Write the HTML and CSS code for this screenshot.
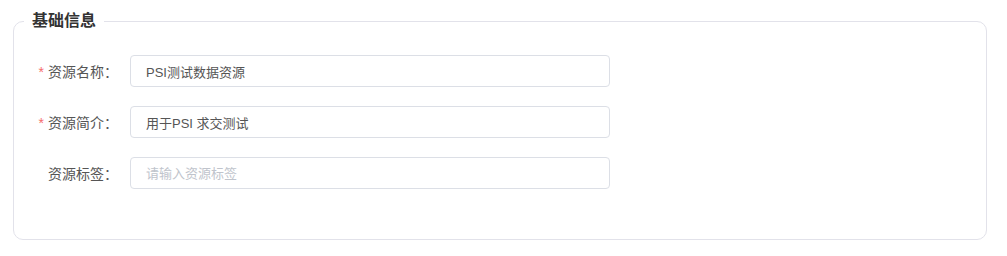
FILE: index.html
```html
<!DOCTYPE html>
<html lang="zh">
<head>
<meta charset="utf-8">
<link rel="stylesheet" href="styles.css">
</head>
<body>
<div class="page">
  <fieldset class="section">
    <legend class="section-title">基础信息</legend>
    <div class="form">
      <div class="form-row">
        <label class="form-label"><span class="req">*</span>资源名称：</label>
        <input class="form-input" type="text" value="PSI测试数据资源">
      </div>
      <div class="form-row">
        <label class="form-label"><span class="req">*</span>资源简介：</label>
        <input class="form-input" type="text" value="用于PSI 求交测试">
      </div>
      <div class="form-row">
        <label class="form-label">资源标签：</label>
        <input class="form-input" type="text" placeholder="请输入资源标签">
      </div>
    </div>
  </fieldset>
</div>
</body>
</html>
```

FILE: styles.css
```css
html, body {
  margin: 0;
  padding: 0;
  background: #ffffff;
}
body {
  font-family: "Liberation Sans", "Noto Sans CJK SC", sans-serif;
  color: #555;
}
.page {
  padding: 10px 20px 0 13px;
}
.section {
  margin: 0;
  padding: 0 0 50px 0;
  border: 1px solid #e2e2ea;
  border-radius: 10px;
  min-inline-size: 0;
}
.section-title {
  margin-left: 10px;
  padding: 0 8px;
  font-size: 16px;
  line-height: 22px;
  font-weight: 600;
  color: #333;
}
.form {
  display: flex;
  flex-direction: column;
  gap: 19px;
  padding-top: 23px;
}
.form-row {
  display: flex;
  align-items: center;
}
.form-label {
  width: 116px;
  box-sizing: border-box;
  padding-right: 12px;
  text-align: right;
  font-size: 14px;
  color: #555;
}
.req {
  color: #f56c6c;
  margin-right: 4px;
}
.form-input {
  width: 480px;
  height: 32px;
  box-sizing: border-box;
  border: 1px solid #dcdfe6;
  border-radius: 4px;
  padding: 0 15px;
  font-family: "Liberation Sans", "Noto Sans CJK SC", sans-serif;
  font-size: 13px;
  color: #555;
  outline: none;
}
.form-input::placeholder {
  color: #c0c4cc;
}
```
